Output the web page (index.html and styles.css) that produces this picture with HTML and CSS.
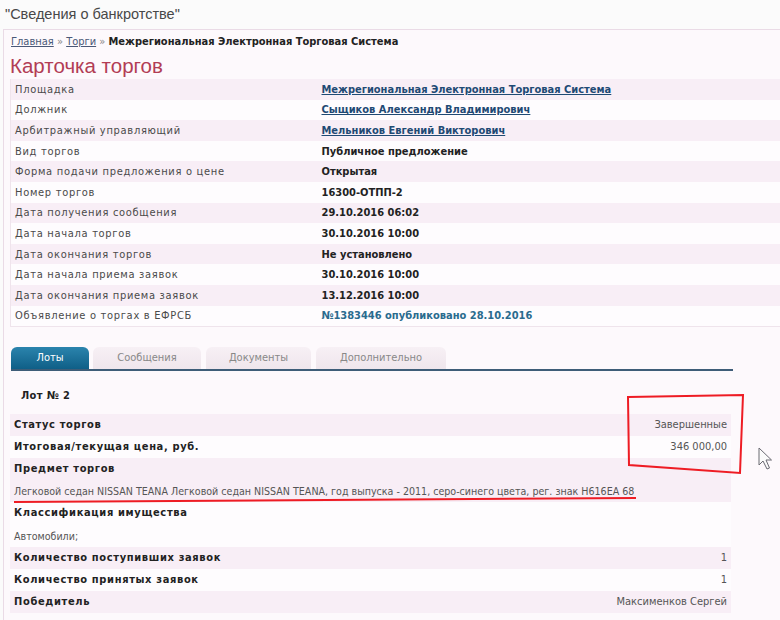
FILE: index.html
```html
<!DOCTYPE html>
<html lang="ru">
<head>
    <meta charset="UTF-8">
    <meta name="viewport" content="width=device-width, initial-scale=1.0">
    <title>Сведения о банкротстве</title>
    <link rel="stylesheet" href="styles.css">
</head>
<body>
    <div class="window-title">"Сведения о банкротстве"</div>

    <div class="page">
        <div class="breadcrumb">
            <a href="#">Главная</a> <span class="sep">»</span> <a href="#">Торги</a> <span class="sep">»</span> <b>Межрегиональная Электронная Торговая Система</b>
        </div>

        <h1>Карточка торгов</h1>

        <table class="info">
            <tr><td class="label">Площадка</td><td class="value"><a href="#">Межрегиональная Электронная Торговая Система</a></td></tr>
            <tr><td class="label">Должник</td><td class="value"><a href="#">Сыщиков Александр Владимирович</a></td></tr>
            <tr><td class="label">Арбитражный управляющий</td><td class="value"><a href="#">Мельников Евгений Викторович</a></td></tr>
            <tr><td class="label">Вид торгов</td><td class="value">Публичное предложение</td></tr>
            <tr><td class="label">Форма подачи предложения о цене</td><td class="value">Открытая</td></tr>
            <tr><td class="label">Номер торгов</td><td class="value">16300-ОТПП-2</td></tr>
            <tr><td class="label">Дата получения сообщения</td><td class="value">29.10.2016 06:02</td></tr>
            <tr><td class="label">Дата начала торгов</td><td class="value">30.10.2016 10:00</td></tr>
            <tr><td class="label">Дата окончания торгов</td><td class="value">Не установлено</td></tr>
            <tr><td class="label">Дата начала приема заявок</td><td class="value">30.10.2016 10:00</td></tr>
            <tr><td class="label">Дата окончания приема заявок</td><td class="value">13.12.2016 10:00</td></tr>
            <tr><td class="label">Объявление о торгах в ЕФРСБ</td><td class="value"><span class="efrsb">№1383446 опубликовано 28.10.2016</span></td></tr>
        </table>

        <div class="tabs">
            <div class="tab active">Лоты</div>
            <div class="tab tab-msg">Сообщения</div>
            <div class="tab tab-docs">Документы</div>
            <div class="tab tab-more">Дополнительно</div>
        </div>

        <div class="lot">
            <div class="lot-title">Лот № 2</div>
            <table class="lot-table">
                <tr class="odd"><td class="name">Статус торгов</td><td class="num">Завершенные</td></tr>
                <tr><td class="name">Итоговая/текущая цена, руб.</td><td class="num">346 000,00</td></tr>
                <tr class="odd">
                    <td colspan="2">
                        <div class="name">Предмет торгов</div>
                        <div class="text">Легковой седан NISSAN TEANA Легковой седан NISSAN TEANA, год выпуска - 2011, серо-синего цвета, рег. знак Н616ЕА 68</div>
                    </td>
                </tr>
                <tr>
                    <td colspan="2">
                        <div class="name">Классификация имущества</div>
                        <div class="text">Автомобили;</div>
                    </td>
                </tr>
                <tr class="odd"><td class="name">Количество поступивших заявок</td><td class="num">1</td></tr>
                <tr><td class="name">Количество принятых заявок</td><td class="num">1</td></tr>
                <tr class="odd"><td class="name">Победитель</td><td class="num">Максименков Сергей</td></tr>
            </table>
        </div>
    </div>

    <!-- red marks drawn over the screenshot -->
    <svg class="marks" width="780" height="620" viewBox="0 0 780 620">
        <polygon points="628,397 743,395 740,473 629,465" fill="none" stroke="#ee1c24" stroke-width="2"/>
        <path d="M14 502 Q 320 500 636 498" fill="none" stroke="#ee1c24" stroke-width="2"/>
        <path d="M759 448 L759 465 L763 461 L767 469 L769.5 468 L766 460 L771.5 460 Z" fill="#fbfbfb" stroke="#6a6a72" stroke-width="1"/>
    </svg>
</body>
</html>
```

FILE: styles.css
```css
* {
    margin: 0;
    padding: 0;
    box-sizing: border-box;
}

body {
    width: 780px;
    height: 620px;
    overflow: hidden;
    background: #fbfbfb;
    font-family: "DejaVu Sans Condensed", "DejaVu Sans", sans-serif;
    font-size: 11px;
    color: #333;
    position: relative;
}

.window-title {
    height: 29px;
    padding: 6px 0 0 5px;
    font-family: "Liberation Sans", Arial, sans-serif;
    font-size: 14.5px;
    color: #484848;
}

.page {
    margin-left: 3px;
    padding-left: 6px;
    background: #fdf9fc;
    border-top: 1px solid #eadbe6;
    border-left: 1px solid #eadbe6;
    height: 591px;
}

.breadcrumb {
    height: 22px;
    padding: 5px 0 0 1px;
    color: #888;
}

.breadcrumb a {
    color: #4a5877;
}

.breadcrumb b {
    color: #222;
}

h1 {
    height: 27px;
    font-family: "Liberation Sans", Arial, sans-serif;
    font-weight: normal;
    font-size: 20.5px;
    color: #b23d55;
    padding-top: 2px;
}

.info {
    width: 100%;
    border-collapse: collapse;
    border-left: 1px solid #efe4ec;
    border-bottom: 1px solid #efe4ec;
}

.info td {
    height: 20.6px;
    padding: 0 4px;
    vertical-align: middle;
}

.info tr:nth-child(odd) {
    background: #f8eef6;
}

.info tr:nth-child(even) {
    background: #fefcfe;
}

.info .label {
    width: 307px;
    letter-spacing: 0.7px;
    color: #4a4a4a;
}

.info .value {
    font-weight: bold;
    color: #222;
}

.info .value a {
    color: #1f4a74;
}

.efrsb {
    color: #2a6b8e;
}

.tabs {
    display: flex;
    align-items: flex-end;
    margin-top: 20px;
    margin-left: 1px;
    width: 722px;
    border-bottom: 2px solid #3e5d78;
}

.tab {
    height: 22px;
    line-height: 22px;
    text-align: center;
    color: #888;
    background: linear-gradient(#f7f0f5, #efe6ec);
    border-radius: 6px 6px 0 0;
    margin-right: 5px;
}

.tab.active {
    width: 78px;
    color: #fff;
    background: linear-gradient(#2b84ad, #0f5f87);
    margin-right: 4px;
}

.tab-msg {
    width: 108px;
}

.tab-docs {
    width: 105px;
}

.tab-more {
    width: 130px;
}

.lot {
    width: 721px;
}

.lot-title {
    font-weight: bold;
    letter-spacing: 0.4px;
    color: #222;
    padding: 18px 0 0 11px;
    height: 43px;
}

.lot-table {
    width: 100%;
    border-collapse: collapse;
}

.lot-table td {
    padding: 0 4px;
    line-height: 22.2px;
}

.lot-table tr {
    background: #fefcfe;
}

.lot-table tr.odd {
    background: #f8eef6;
}

.lot-table .name {
    font-weight: bold;
    letter-spacing: 0.65px;
    color: #222;
}

.lot-table .num {
    text-align: right;
    color: #555;
}

.lot-table .text {
    font-size: 10.6px;
    color: #555;
}

.marks {
    position: absolute;
    left: 0;
    top: 0;
    pointer-events: none;
}
```
